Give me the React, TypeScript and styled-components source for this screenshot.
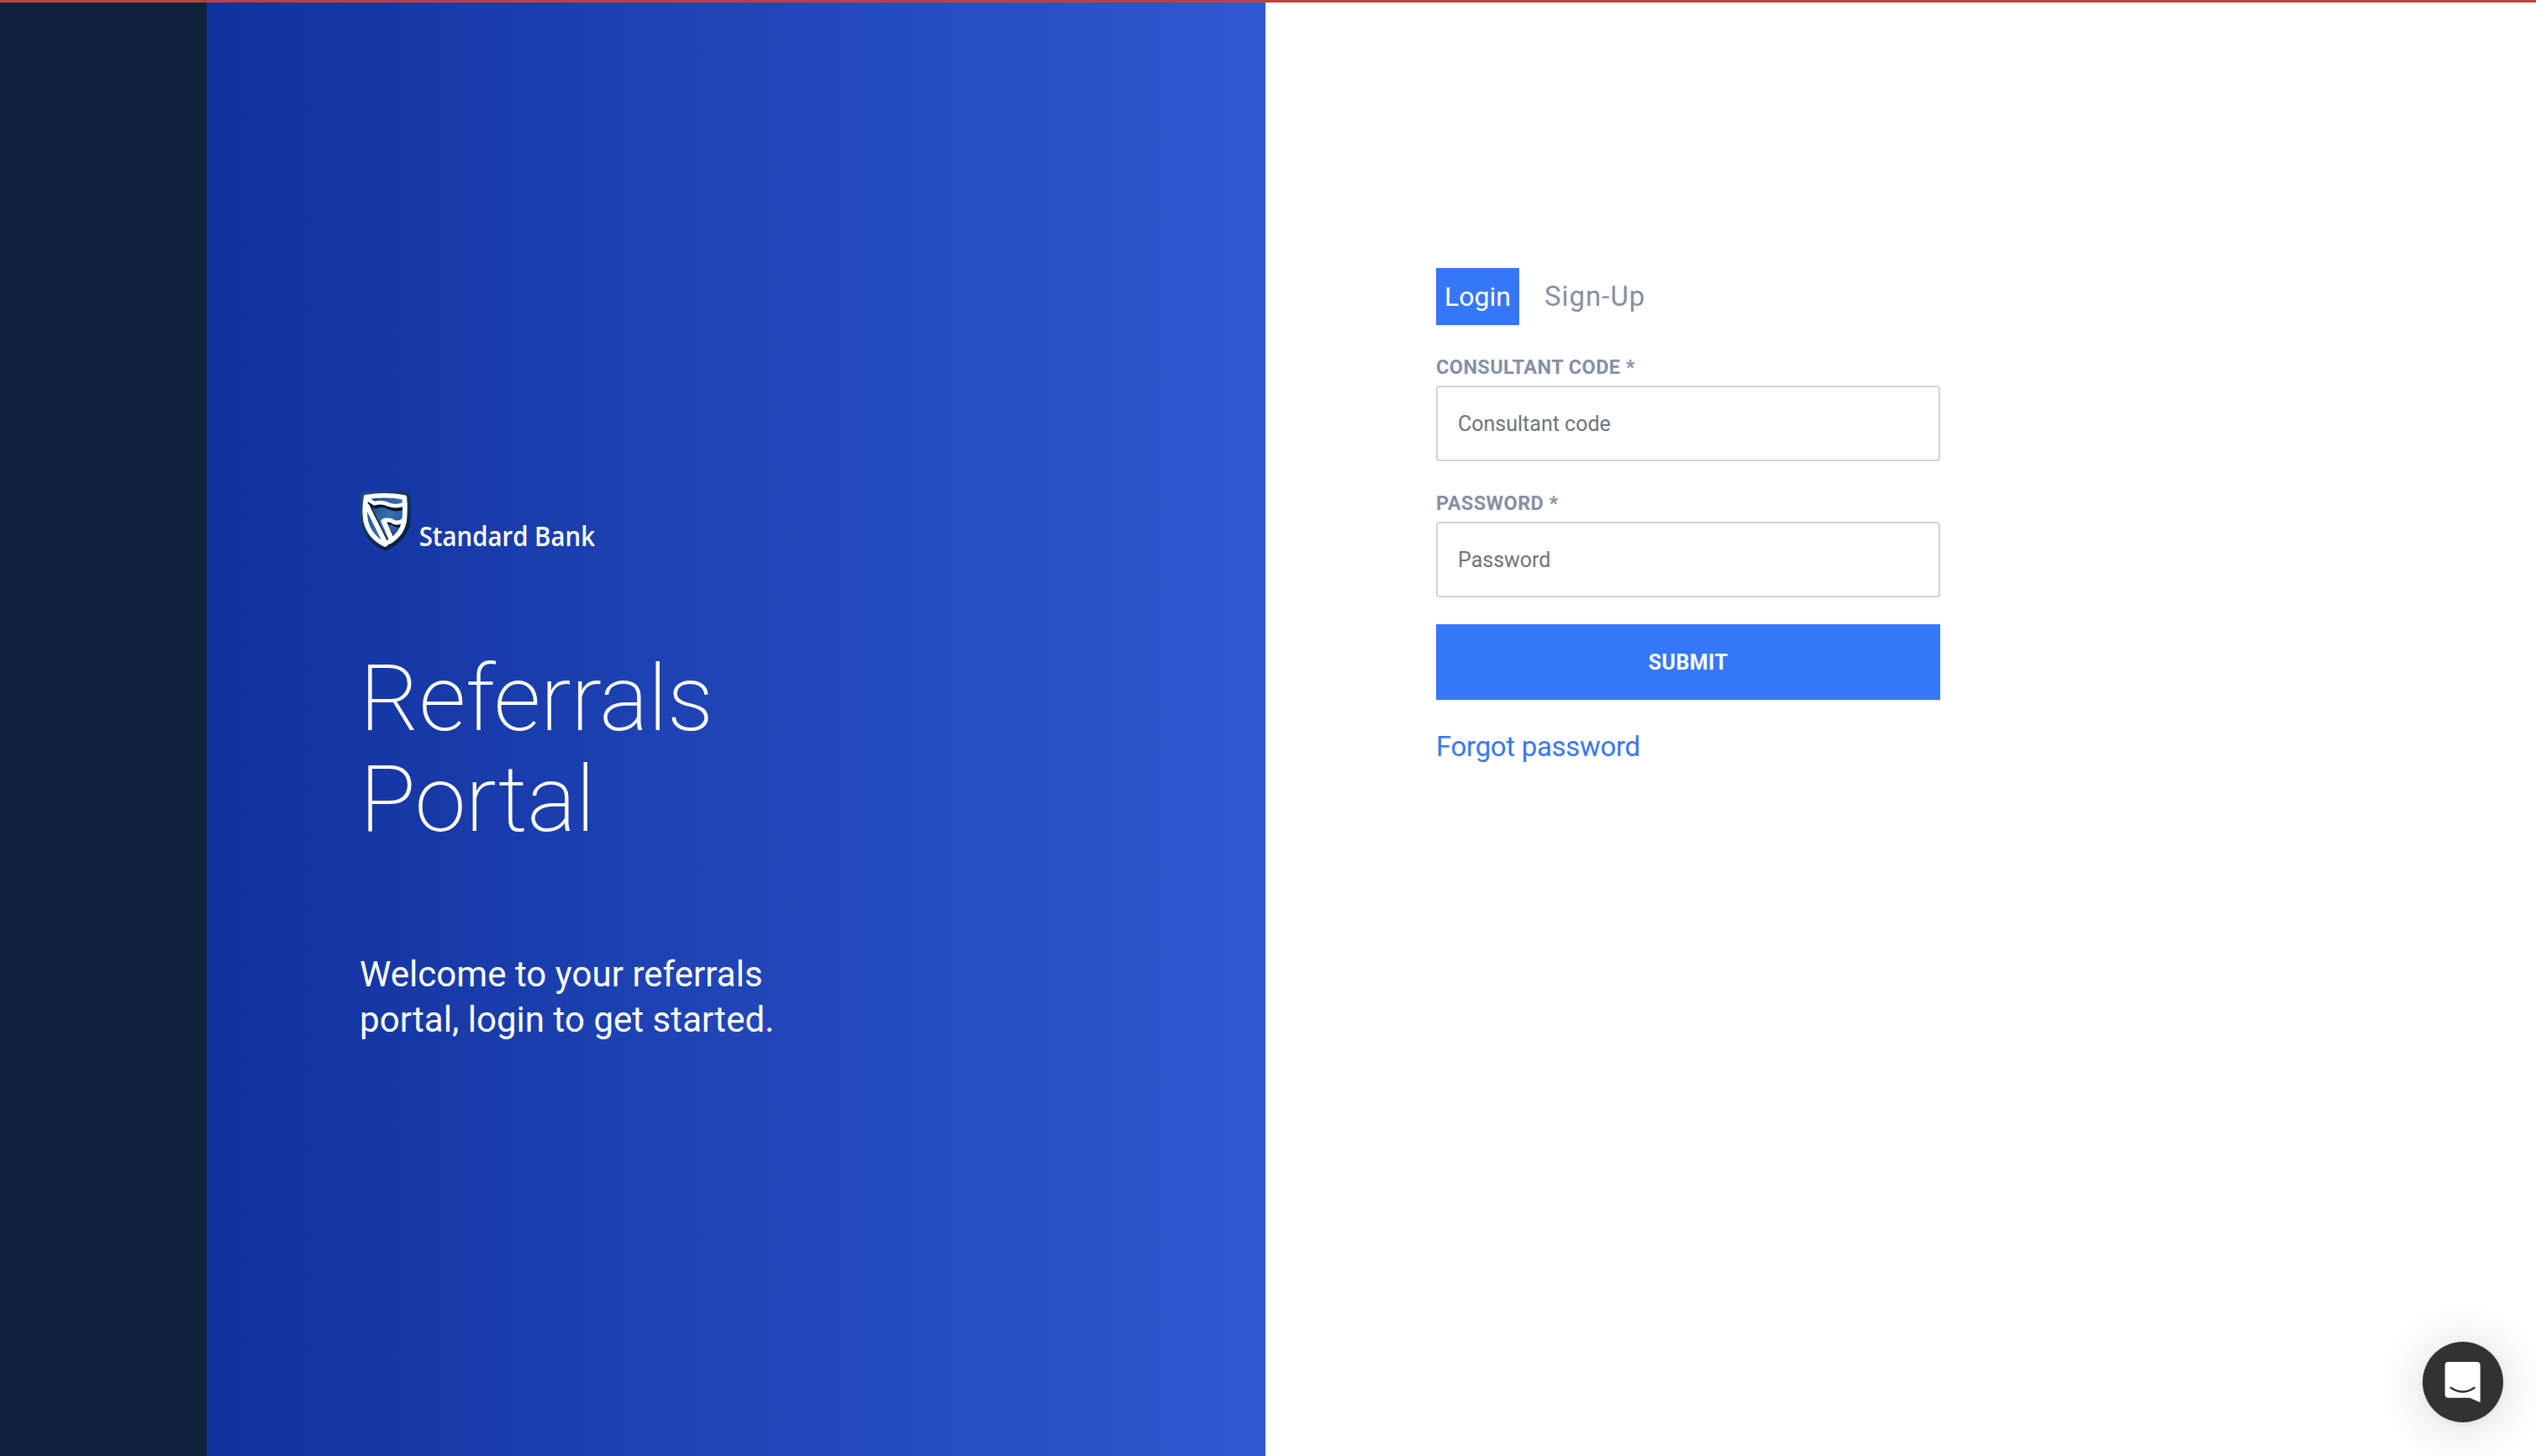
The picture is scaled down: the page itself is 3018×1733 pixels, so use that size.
import React from "react";
import styled, { createGlobalStyle } from "styled-components";

const GlobalStyle = createGlobalStyle`
  *, *::before, *::after { box-sizing: border-box; }
  body { margin: 0; background: #fff; font-family: Roboto, "Liberation Sans", sans-serif; }
`;

const Page = styled.div`
  display: flex;
  height: 1733px;
  overflow: hidden;
  background: #fff;
`;

const TopStripe = styled.div`
  position: absolute;
  inset: 0 0 auto 0;
  height: 3px;
  background: linear-gradient(#c03a38 0 1px, #b84644 1px 3px);
`;

const Rail = styled.div`
  width: 246px;
  background: #10213c;
`;

const Hero = styled.section`
  display: flex;
  flex-direction: column;
  align-items: flex-start;
  width: 1260px;
  padding: 582px 0 0 182px;
  color: #fff;
  background: linear-gradient(90deg, #11319d, #2f59d2);
`;

const LogoDrawing = styled.svg`
  display: block;
  flex: none;
  overflow: visible;
`;

const Title = styled.h1`
  margin: 114px 0 0;
  font-size: 110px;
  font-weight: 200;
  line-height: 120px;
  letter-spacing: -0.6px;
`;

const Lead = styled.p`
  margin: 121px 0 0;
  font-size: 42px;
  font-weight: 450;
  line-height: 54px;
  letter-spacing: 0.05px;
`;

const FormPane = styled.main`
  flex: 1;
  padding: 319px 0 0 203px;
`;

const LoginForm = styled.form`
  display: flex;
  flex-direction: column;
  align-items: flex-start;
  width: 600px;
`;

const Tabs = styled.nav`
  display: flex;
  gap: 20px;
  margin-bottom: 36px;
`;

const Tab = styled.a<{ $active?: boolean }>`
  padding: 0 10px;
  font-size: ${(p) => (p.$active ? 32 : 33)}px;
  line-height: 68px;
  letter-spacing: ${(p) => (p.$active ? "0" : "1px")};
  color: ${(p) => (p.$active ? "#fff" : "#8790a3")};
  background: ${(p) => (p.$active ? "#3578f7" : "transparent")};
`;

const Field = styled.label<{ $last?: boolean }>`
  display: flex;
  flex-direction: column;
  gap: 8px;
  width: 100%;
  margin-bottom: ${(p) => (p.$last ? 32 : 36)}px;
`;

const FieldName = styled.span`
  font-size: 23.5px;
  font-weight: 700;
  line-height: 28px;
  letter-spacing: 0.4px;
  color: #8790a3;
`;

const TextInput = styled.input`
  width: 100%;
  height: 90px;
  padding: 0 24px;
  border: 2px solid #ced4da;
  border-radius: 4px;
  font: 400 25px Roboto, sans-serif;
  &::placeholder { color: #6c757d; opacity: 1; }
`;

const Submit = styled.button`
  width: 100%;
  height: 90px;
  padding: 0;
  border: 0;
  color: #fff;
  background: #3578f7;
  font: 700 25px Roboto, sans-serif;
  letter-spacing: 0.4px;
`;

const Forgot = styled.a`
  margin-top: 32px;
  font-size: 33px;
  line-height: 48px;
  letter-spacing: -0.32px;
  color: #3578f7;
`;

const Launcher = styled.button`
  position: fixed;
  right: 39px;
  bottom: 40px;
  width: 96px;
  height: 96px;
  padding: 0;
  border: 0;
  border-radius: 50%;
  background: #323232;
  box-shadow: 0 2px 12px rgba(0, 0, 0, 0.06), 0 4px 64px rgba(0, 0, 0, 0.16);
`;

function BankLogo() {
  return (
    <LogoDrawing width="284" height="76" viewBox="54 36 852 228" role="img" aria-label="Standard Bank">
      <defs>
        <linearGradient id="rim" x1="0" y1="0" x2="0.7" y2="1">
          <stop offset="0" stopColor="#205090" />
          <stop offset="1" stopColor="#081c38" />
        </linearGradient>
        <linearGradient id="field" x1="0" y1="0" x2="1" y2="1">
          <stop offset="0" stopColor="#123c74" />
          <stop offset="0.5" stopColor="#3870b0" />
          <stop offset="1" stopColor="#123c74" />
        </linearGradient>
      </defs>
      <path d="M58 60Q60 47 76 45Q145 37 216 45Q234 47 236 62Q241 112 235 158Q224 222 145 258Q72 226 58 164Q51 112 58 60Z" fill="url(#rim)" />
      <path d="M76 66Q145 52 216 66Q220 115 215 152Q204 204 148 238Q88 206 76 152Q70 110 76 66Z" fill="url(#field)" />
      <path
        d="M82 74L107 92Q132 82 158 96Q184 107 208 94M84 96L150 232M141 152Q162 144 180 157Q196 162 212 150M141 156L172 216"
        fill="none" stroke="#06152c" strokeWidth="17" strokeLinejoin="round" transform="translate(4 6)"
      />
      <g fill="none" stroke="#fff" strokeLinejoin="round" strokeLinecap="round">
        <path strokeWidth="17" d="M77 65Q145 53 214 66Q218 115 213 152Q203 200 160 224M77 65Q69 112 76 152Q90 208 144 234" />
        <path strokeWidth="14" d="M78 70L107 88Q132 79 158 92Q184 102 210 91" />
        <path strokeWidth="17" d="M80 96L148 232" />
        <path strokeWidth="15" d="M139 150Q160 142 178 155Q194 160 212 147" />
        <path strokeWidth="18" d="M140 152L168 216" />
      </g>
      <text x="266" y="241" textLength="628" lengthAdjust="spacingAndGlyphs" fill="#fff" fontFamily='"Open Sans", sans-serif' fontSize="99" fontWeight="650">Standard Bank</text>
    </LogoDrawing>
  );
}

function ChatIcon() {
  return (
    <svg width="96" height="96" viewBox="70 72 288 288" aria-hidden="true" display="block">
      <path d="M162 144H264Q276 144 276 156V289L238 272H162Q150 272 150 260V156Q150 144 162 144Z" fill="#fff" />
      <path d="M171 236Q213 265 255 236" fill="none" stroke="#323232" strokeWidth="7" strokeLinecap="round" />
    </svg>
  );
}

export default function App() {
  return (
    <>
      <GlobalStyle />
      <Page>
        <Rail />
        <Hero>
          <BankLogo />
          <Title>Referrals<br />Portal</Title>
          <Lead>Welcome to your referrals<br />portal, login to get started.</Lead>
        </Hero>
        <FormPane>
          <LoginForm>
            <Tabs>
              <Tab $active>Login</Tab>
              <Tab>Sign-Up</Tab>
            </Tabs>
            <Field>
              <FieldName>CONSULTANT CODE *</FieldName>
              <TextInput placeholder="Consultant code" />
            </Field>
            <Field $last>
              <FieldName>PASSWORD *</FieldName>
              <TextInput type="password" placeholder="Password" />
            </Field>
            <Submit type="button">SUBMIT</Submit>
            <Forgot>Forgot password</Forgot>
          </LoginForm>
        </FormPane>
      </Page>
      <TopStripe />
      <Launcher type="button" aria-label="Chat"><ChatIcon /></Launcher>
    </>
  );
}
